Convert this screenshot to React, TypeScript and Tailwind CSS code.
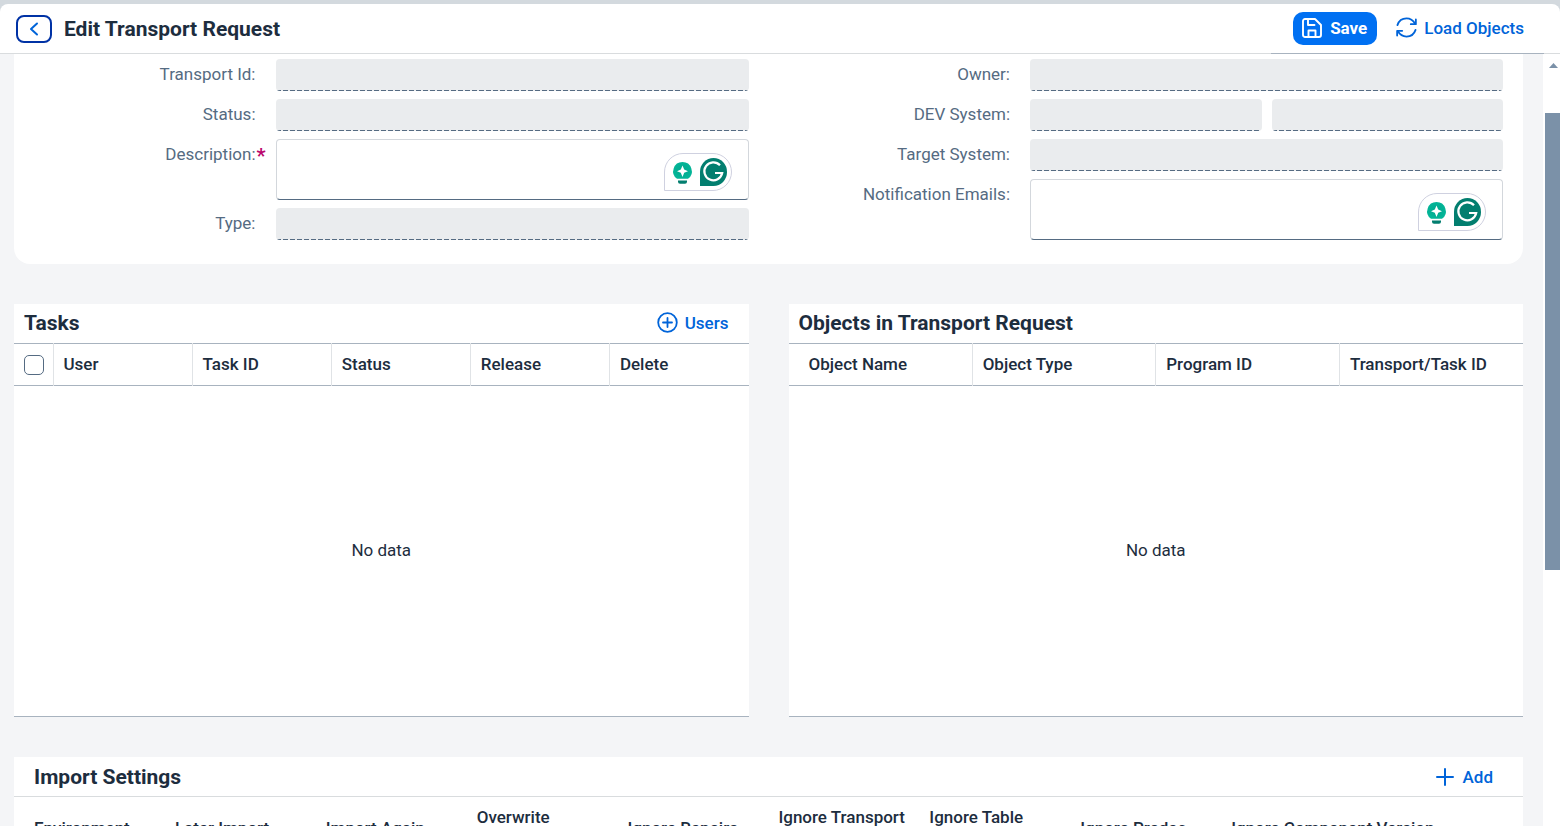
import React, { useId } from "react";

function SaveIcon() {
  return (
    <svg width="20" height="20" viewBox="0 0 20 20" fill="none" stroke="currentColor" strokeWidth="1.9" strokeLinejoin="round" aria-hidden="true">
      <path d="M3 1H13L19 7V17a2 2 0 0 1-2 2H3a2 2 0 0 1-2-2V3a2 2 0 0 1 2-2Z" />
      <path d="M6 1.500V7H12.500" strokeLinecap="round" />
      <path d="M6.500 18.500V12.500H13.500V18.500" />
    </svg>
  );
}

function RefreshIcon() {
  return (
    <svg width="21" height="21" viewBox="0 0 22 22" fill="none" stroke="currentColor" strokeWidth="1.9" strokeLinecap="round" strokeLinejoin="round" aria-hidden="true">
      <path d="M1.500 8.500C3 4 7 1.500 11 1.500c4 0 7 2 9 5.500" />
      <path d="M20.800 2.500V7.500H15.500" />
      <path d="M20.500 13.500C19 18 15 20.500 11 20.500c-4 0-7-2-9-5.500" />
      <path d="M1.200 19.500V14.500H6.500" />
    </svg>
  );
}

function AssistantBadge() {
  const id = useId();
  return (
    <svg className="absolute right-4 bottom-[9px]" width="70" height="38" viewBox="0 0 70 38" aria-hidden="true">
      <defs>
        <radialGradient id={id} cx="0.5" cy="0.5" r="0.6">
          <stop offset="0" stopColor="#00a78e" />
          <stop offset="1" stopColor="#04b899" />
        </radialGradient>
      </defs>
      <path d="M1.500 37.500V19A18.500 18.500 0 0 1 20 .5H50a18.500 18.500 0 0 1 0 37Z" fill="#fff" stroke="#cfd1e0" />
      <path d="M19.500 9a9.300 9.300 0 0 0-5.500 16.800h11A9.300 9.300 0 0 0 19.500 9Z" fill={`url(#${id})`} />
      <path d="M19.500 12.500 21.200 16.600 25 18.200 21.200 19.800 19.500 24 17.800 19.800 14 18.200 17.800 16.600Z" fill="#fff" />
      <path d="M15 27.500h9v1.200a2 2 0 0 1-2 2h-5a2 2 0 0 1-2-2Z" fill="#027e6f" />
      <path d="M37 33V19a13.500 14 0 1 1 13.500 14Z" fill="#027e6f" />
      <path d="M57 12.200A9 9 0 1 0 59.200 20H52" fill="none" stroke="#fff" strokeWidth="2.200" />
    </svg>
  );
}

function Row({ label, id, required, children }: { label: string; id: string; required?: boolean; children: React.ReactNode }) {
  return (
    <div className="grid grid-cols-3">
      <label htmlFor={id} className="relative h-8 pr-[10px] text-right leading-[30px] text-[#556b82]">
        {label}
        {required && <span className="absolute right-0 top-0.5 text-xl font-bold leading-[30px] text-[#ba066c]">*</span>}
      </label>
      <div className="col-span-2 flex gap-[10px] pl-[10px] pr-5">{children}</div>
    </div>
  );
}

function ReadField({ id, label }: { id?: string; label?: string }) {
  return (
    <input
      id={id}
      aria-label={label}
      readOnly
      className="h-8 w-full min-w-0 flex-1 rounded bg-[#eaecee] bg-[repeating-linear-gradient(90deg,#556b82_0_5px,#eaecee_5px_7px)] bg-[length:100%_1px] bg-bottom bg-no-repeat px-2 outline-none"
    />
  );
}

function AreaField({ id }: { id: string }) {
  return (
    <div className="relative flex-1">
      <textarea id={id} className="block h-[61px] w-full resize-none rounded border border-[#d3d7dc] border-b-[#556b82] bg-white p-2 outline-none" />
      <AssistantBadge />
    </div>
  );
}

const toolButton = "flex items-center gap-[7px] font-medium text-[#0064d9]";
const cell = "border-r border-[#e0e3e6] px-[10px] pb-0.5 text-left font-medium last:border-r-0";
const importCell = "px-[10px] text-left font-medium first:pl-5";
const heading = "text-[21px] font-bold";

export default function App() {
  return (
    <div className="flex h-screen flex-col overflow-hidden bg-[#d3d9de] pt-1 font-['Roboto',sans-serif] text-[17px] leading-[22px] text-[#1d2d3e]">
      <header className="flex h-[49px] shrink-0 items-center rounded-t-lg bg-white pl-4 pr-9">
        <button aria-label="Back" className="flex h-7 w-9 items-center justify-center rounded-lg border-2 border-[#0032a5] text-[#0064d9]">
          <svg width="10" height="14" viewBox="0 0 10 14" fill="none" stroke="currentColor" strokeWidth="2" strokeLinecap="round" strokeLinejoin="round"><path d="M8 1.500 2 7l6 5.500" /></svg>
        </button>
        <h1 className={`${heading} ml-3 flex-1`}>Edit Transport Request</h1>
        <button className="flex h-[33px] items-center gap-2 rounded-[10px] bg-[#0070f2] pb-px pl-[9px] pr-[10px] font-bold text-white"><SaveIcon />Save</button>
        <button className={`${toolButton} ml-[19px] pb-0.5`}><RefreshIcon />Load Objects</button>
      </header>
      <div className="flex h-px shrink-0 bg-[#d9dcde]"><span className="ml-auto mr-4 w-[273px] bg-[#a8b3bf]" /></div>

      <div className="flex min-h-0 flex-1">
        <main className="min-w-0 flex-1 overflow-hidden bg-[#f4f5f7] pl-[14px] pr-5">
          <section className="grid grid-cols-2 rounded-b-2xl bg-white pb-6 pt-[5px]">
            <div className="flex flex-col gap-2">
              <Row label="Transport Id:" id="tid"><ReadField id="tid" /></Row>
              <Row label="Status:" id="status"><ReadField id="status" /></Row>
              <Row label="Description:" id="desc" required><AreaField id="desc" /></Row>
              <Row label="Type:" id="type"><ReadField id="type" /></Row>
            </div>
            <div className="flex flex-col gap-2">
              <Row label="Owner:" id="owner"><ReadField id="owner" /></Row>
              <Row label="DEV System:" id="dev"><ReadField id="dev" /><ReadField label="DEV System client" /></Row>
              <Row label="Target System:" id="target"><ReadField id="target" /></Row>
              <Row label="Notification Emails:" id="mails"><AreaField id="mails" /></Row>
            </div>
          </section>

          <div className="mt-10 grid grid-cols-2 gap-10">
            <section className="bg-white">
              <div className="flex h-[39px] items-center justify-between pb-0.5 pl-[10px] pr-5">
                <h2 className={heading}>Tasks</h2>
                <button className={toolButton}>
                  <svg width="21" height="21" viewBox="0 0 21 21" fill="none" stroke="currentColor" strokeWidth="1.800" strokeLinecap="round"><circle cx="10.500" cy="10.500" r="9.300" /><path d="M10.500 6v9M6 10.500h9" /></svg>
                  Users
                </button>
              </div>
              <table className="w-full table-fixed border-collapse">
                <thead>
                  <tr className="h-[42px] border-y border-[#a8b3bf]">
                    <th className="w-[39px] border-r border-[#e0e3e6] pl-[10px]">
                      <input type="checkbox" aria-label="Select all" className="block size-5 appearance-none rounded-[5px] border border-[#556b82] bg-white" />
                    </th>
                    {["User", "Task ID", "Status", "Release", "Delete"].map((t) => <th key={t} className={cell}>{t}</th>)}
                  </tr>
                </thead>
                <tbody>
                  <tr className="h-[331px] border-b border-[#a8b3bf]"><td colSpan={6} className="pb-0.5 text-center">No data</td></tr>
                </tbody>
              </table>
            </section>
            <section className="bg-white">
              <div className="flex h-[39px] items-center px-[10px] pb-0.5"><h2 className={heading}>Objects in Transport Request</h2></div>
              <table className="w-full table-fixed border-collapse">
                <thead>
                  <tr className="h-[42px] border-y border-[#a8b3bf]">
                    {["Object Name", "Object Type", "Program ID", "Transport/Task ID"].map((t) => <th key={t} className={`${cell} first:pl-5`}>{t}</th>)}
                  </tr>
                </thead>
                <tbody>
                  <tr className="h-[331px] border-b border-[#a8b3bf]"><td colSpan={4} className="pb-0.5 text-center">No data</td></tr>
                </tbody>
              </table>
            </section>
          </div>

          <section className="mt-10 bg-white">
            <div className="flex h-[39px] items-center justify-between pl-5 pr-[30px]">
              <h2 className={heading}>Import Settings</h2>
              <button className={toolButton}>
                <svg width="20" height="20" viewBox="0 0 20 20" fill="none" stroke="currentColor" strokeWidth="2" strokeLinecap="round"><path d="M9 2v16M1 10h16" /></svg>
                Add
              </button>
            </div>
            <table className="w-full table-fixed border-collapse">
              <thead>
                <tr className="h-[62px] border-t border-[#d9dcde]">
                  {["Environment", "Later Import", "Import Again"].map((t) => <th key={t} className={importCell}>{t}</th>)}
                  <th className={importCell}><span className="block h-11">Overwrite</span></th>
                  <th className={importCell}>Ignore Repairs</th>
                  <th className={importCell}><span className="block h-11 whitespace-nowrap">Ignore Transport</span></th>
                  <th className={importCell}><span className="block h-11">Ignore Table</span></th>
                  <th className={importCell}>Ignore Predec.</th>
                  <th colSpan={2} className={importCell}>Ignore Component Version</th>
                </tr>
              </thead>
            </table>
          </section>
        </main>

        <div className="flex w-[17px] shrink-0 flex-col items-end bg-white" aria-hidden="true">
          <svg className="mt-[9px] mr-0.5" width="9" height="5" viewBox="0 0 9 5"><path d="M4.500 0 9 5H0Z" fill="#7b91a8" /></svg>
          <div className="mt-[45px] h-[59.2%] w-[15px] bg-[#7b91a8]" />
        </div>
      </div>
    </div>
  );
}
